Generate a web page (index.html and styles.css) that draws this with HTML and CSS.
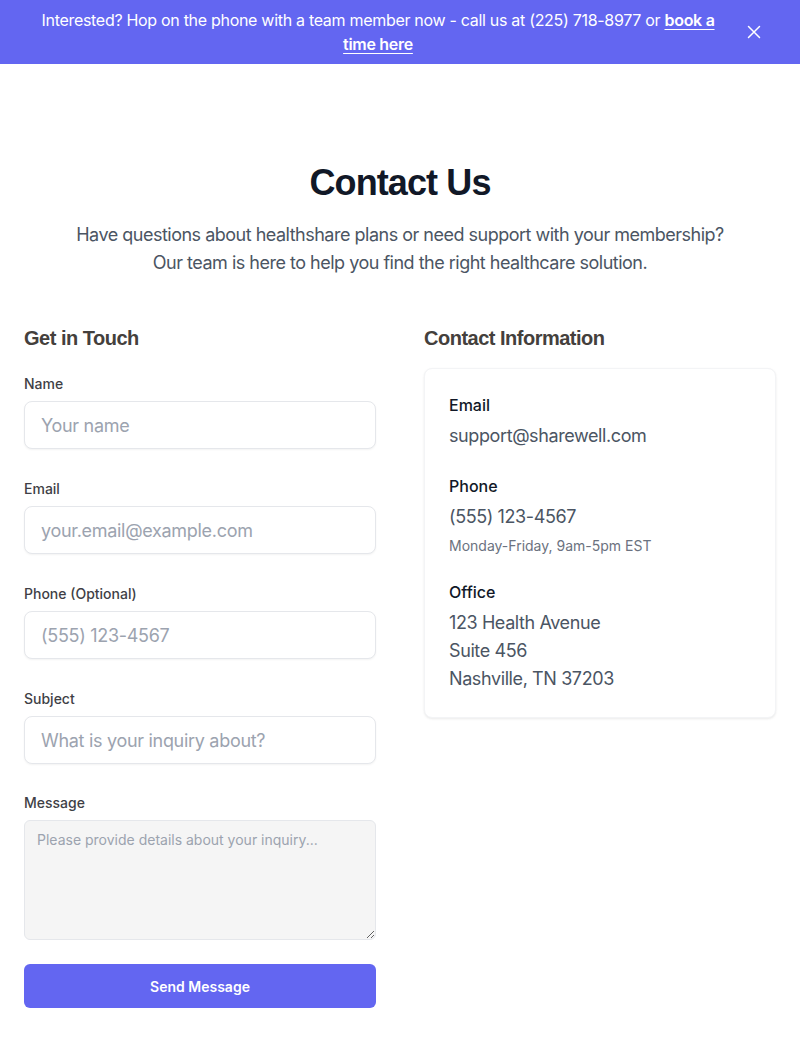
FILE: index.html
```html
<!DOCTYPE html>
<html lang="en">
<head>
<meta charset="utf-8">
<title>Contact Us</title>
<link rel="stylesheet" href="styles.css">
</head>
<body>
<div class="banner">
  <p class="banner-text">Interested? Hop on the phone with a team member now - call us at (225) 718-8977 or <a href="#">book a time here</a></p>
  <button class="banner-close" aria-label="Close">
    <svg width="14" height="14" viewBox="0 0 14 14" fill="none" stroke="#ffffff" stroke-width="1.5" stroke-linecap="round"><path d="M1.5 1.5L12.5 12.5M12.5 1.5L1.5 12.5"/></svg>
  </button>
</div>

<main class="page">
  <header class="intro">
    <h1 class="title">Contact Us</h1>
    <p class="lead">Have questions about healthshare plans or need support with your membership?<br>Our team is here to help you find the right healthcare solution.</p>
  </header>

  <div class="columns">
    <section class="col">
      <h2 class="section-title">Get in Touch</h2>
      <form class="form">
        <div class="field">
          <label class="label">Name</label>
          <input class="input" type="text" placeholder="Your name">
        </div>
        <div class="field">
          <label class="label">Email</label>
          <input class="input" type="email" placeholder="your.email@example.com">
        </div>
        <div class="field">
          <label class="label">Phone (Optional)</label>
          <input class="input" type="tel" placeholder="(555) 123-4567">
        </div>
        <div class="field field-subject">
          <label class="label">Subject</label>
          <input class="input" type="text" placeholder="What is your inquiry about?">
        </div>
        <div class="field field-last">
          <label class="label">Message</label>
          <textarea class="textarea" placeholder="Please provide details about your inquiry..."></textarea>
        </div>
        <button type="button" class="submit">Send Message</button>
      </form>
    </section>

    <section class="col">
      <h2 class="section-title">Contact Information</h2>
      <div class="card">
        <div class="info">
          <h3 class="info-label">Email</h3>
          <p class="info-value">support@sharewell.com</p>
        </div>
        <div class="info">
          <h3 class="info-label">Phone</h3>
          <p class="info-value">(555) 123-4567</p>
          <p class="info-note">Monday-Friday, 9am-5pm EST</p>
        </div>
        <div class="info">
          <h3 class="info-label">Office</h3>
          <p class="info-value address">123 Health Avenue<br>Suite 456<br>Nashville, TN 37203</p>
        </div>
      </div>
    </section>
  </div>
</main>
</body>
</html>
```

FILE: styles.css
```css
* { box-sizing: border-box; }

html, body {
  margin: 0;
  padding: 0;
  background: #ffffff;
  font-family: Inter, "Noto Sans", sans-serif;
  color: #111827;
}

.banner {
  height: 64px;
  background: #6366f1;
  display: flex;
  align-items: center;
  padding: 0 36px 0 32px;
}

.banner-text {
  flex: 1;
  margin: 0;
  color: #ffffff;
  font-size: 16px;
  line-height: 24px;
  text-align: center;
  letter-spacing: -0.3px;
}

.banner-text a {
  color: #ffffff;
  font-weight: 600;
  text-decoration: underline;
  text-underline-offset: 3px;
}

.banner-close {
  margin-left: 20px;
  width: 20px;
  height: 20px;
  padding: 0;
  border: 0;
  background: transparent;
  display: flex;
  align-items: center;
  justify-content: center;
  cursor: pointer;
}

.page {
  padding: 99px 24px 40px;
}

.intro {
  text-align: center;
}

.title {
  margin: 0;
  font-family: "Liberation Sans", Arial, sans-serif;
  font-size: 36px;
  line-height: 40px;
  font-weight: 700;
  letter-spacing: -0.9px;
  color: #111827;
}

.lead {
  margin: 18px 0 0;
  font-size: 18px;
  line-height: 28px;
  color: #4b5563;
  letter-spacing: -0.5px;
}

.columns {
  margin-top: 47px;
  display: grid;
  grid-template-columns: 1fr 1fr;
  gap: 48px;
}

.section-title {
  margin: 0;
  font-family: "Liberation Sans", Arial, sans-serif;
  font-size: 20px;
  line-height: 28px;
  font-weight: 700;
  letter-spacing: -0.5px;
  color: #44403c;
}

.form {
  margin-top: 22px;
  display: flex;
  flex-direction: column;
}

.field {
  display: flex;
  flex-direction: column;
  margin-bottom: 30px;
}

.field-subject {
  margin-bottom: 29px;
}

.field-last {
  margin-bottom: 24px;
}

.label {
  font-size: 14px;
  line-height: 20px;
  font-weight: 500;
  color: #3f3f46;
  margin-bottom: 7px;
}

.input {
  display: block;
  width: 100%;
  height: 48px;
  padding: 0 16px;
  border: 1px solid #e5e7eb;
  border-radius: 8px;
  background: #ffffff;
  box-shadow: 0 1px 2px rgba(0, 0, 0, 0.05);
  font-family: Inter, "Noto Sans", sans-serif;
  font-size: 18px;
  letter-spacing: -0.3px;
  color: #111827;
  outline: none;
}

.input::placeholder {
  color: #9ca3af;
}

.textarea {
  display: block;
  width: 100%;
  height: 120px;
  padding: 8px 12px;
  border: 1px solid #e5e7eb;
  border-radius: 6px;
  background: #f5f5f5;
  font-family: Inter, "Noto Sans", sans-serif;
  font-size: 14px;
  line-height: 22px;
  color: #111827;
  resize: vertical;
  outline: none;
}

.textarea::placeholder {
  color: #9ca3af;
}

.submit {
  height: 44px;
  width: 100%;
  border: 0;
  border-radius: 6px;
  background: #6366f1;
  color: #ffffff;
  font-family: Inter, "Noto Sans", sans-serif;
  font-size: 14px;
  font-weight: 600;
  cursor: pointer;
}

.card {
  margin-top: 16px;
  border: 1px solid #f3f4f6;
  border-radius: 8px;
  background: #ffffff;
  box-shadow: 0 1px 3px rgba(0, 0, 0, 0.06), 0 1px 2px rgba(0, 0, 0, 0.03);
  padding: 24px;
  display: flex;
  flex-direction: column;
  gap: 24px;
}

.info-label {
  margin: 0;
  font-size: 16px;
  line-height: 24px;
  font-weight: 500;
  color: #111827;
}

.info-value {
  margin: 5px 0 0;
  font-size: 18px;
  line-height: 28px;
  letter-spacing: -0.4px;
  color: #4b5563;
}

.address {
  line-height: 28px;
}

.info-note {
  margin: 5px 0 0;
  font-size: 14px;
  line-height: 20px;
  color: #6b7280;
}
```
